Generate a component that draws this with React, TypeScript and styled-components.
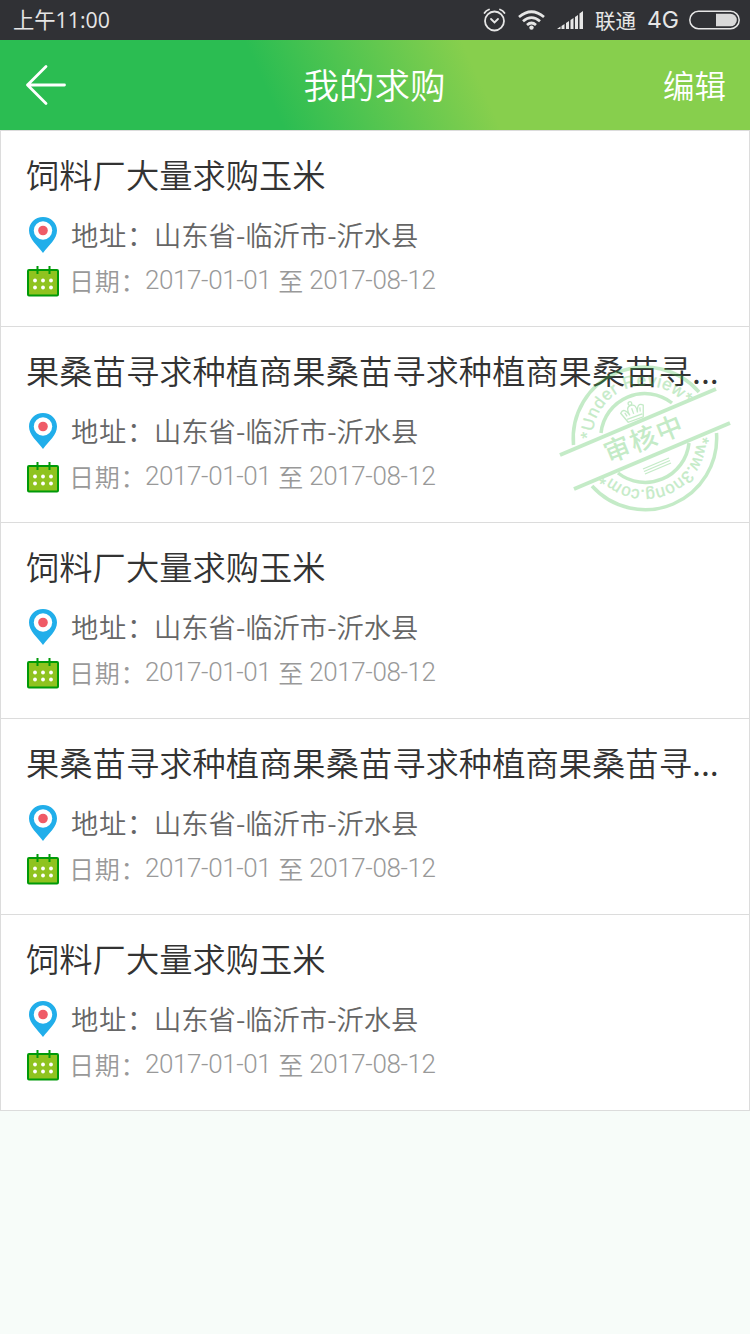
import React from "react";
import styled, { createGlobalStyle } from "styled-components";

const Global = createGlobalStyle`
  * { box-sizing: border-box; }
  body { margin: 0; background: #f7fcf9; font-family: "Noto Sans CJK SC", sans-serif; }
`;

const Screen = styled.main`
  width: 750px;
  min-height: 1334px;
  background: #f7fcf9;
`;

const StatusBar = styled.div`
  height: 40px;
  padding: 0 10px 0 13px;
  display: flex;
  align-items: center;
  background: #303135;
  color: #e6e6e6;
  font-size: 21px;
  line-height: 40px;
`;

const Clock = styled.span`
  flex: 1;
  font-family: "Open Sans", "Noto Sans CJK SC", sans-serif;
  font-size: 21.3px;
  font-weight: 400;
`;

const StatusIcon = styled.svg<{ $gap: number }>`
  display: block;
  flex: none;
  margin-right: ${(p) => p.$gap}px;
`;

const Carrier = styled.span`
  width: 41px;
  margin-right: 11px;
  font-size: 20.5px;
`;

const Network = styled.span`
  width: 32px;
  margin-right: 10px;
  font-family: Inter, sans-serif;
  font-size: 23px;
`;

const Header = styled.header`
  height: 90px;
  padding: 0 24px 0 25px;
  display: grid;
  grid-template-columns: 1fr auto 1fr;
  align-items: center;
  background: linear-gradient(66deg, #2bbd52 36%, #87cf4d 63.5%);
  color: #fff;
`;

const BackButton = styled.button`
  width: 42px;
  height: 42px;
  padding: 0;
  border: 0;
  background: none;
  color: inherit;
`;

const Title = styled.h1`
  margin: 0;
  padding: 0 2px 3px 0;
  font-size: 35.5px;
  font-weight: 350;
  line-height: 87px;
`;

const EditButton = styled.button`
  justify-self: end;
  padding: 0 0 1px;
  border: 0;
  background: none;
  color: inherit;
  font: 350 31.5px/89px "Noto Sans CJK SC", sans-serif;
`;

const List = styled.ul`
  margin: 0;
  padding: 0;
  list-style: none;
  border: 1px solid #dcdcdc;
  border-top-width: 0;
`;

const Card = styled.li`
  position: relative;
  height: 196px;
  padding: 19px 25px 0;
  border-top: 1px solid #dcdcdc;
  background: #fff;
`;

const CardTitle = styled.h2`
  margin: 0;
  color: #333;
  font-size: 33.3px;
  font-weight: 350;
  line-height: 48px;
  white-space: nowrap;
`;

const Line = styled.div<{ $tone: string; $size: number; $height: number }>`
  display: flex;
  align-items: center;
  height: ${(p) => p.$height}px;
  color: ${(p) => p.$tone};
  font-size: ${(p) => p.$size}px;
  font-weight: 350;
  white-space: pre;

  > svg {
    flex: none;
    margin-left: 1px;
  }
`;

const AddressLine = styled(Line)`
  margin-top: 14px;

  > span {
    padding-bottom: 2px;
  }
`;

const DateLine = styled(Line)`
  > svg {
    margin-top: 2px;
  }
`;

const Label = styled.span<{ $width: number; $indent: number }>`
  width: ${(p) => p.$width}px;
  margin-left: ${(p) => p.$indent}px;
  letter-spacing: 0.7px;
`;

const Numerals = styled.span`
  font-family: Roboto, sans-serif;
  font-size: 26px;
  font-weight: 350;
  letter-spacing: -0.4px;
  line-height: 40px;
  padding-bottom: 1px;
`;

const Until = styled.span`
  width: 25px;
  margin: 0 6px 0 7px;
`;

const Stamp = styled.svg`
  position: absolute;
  left: 554px;
  top: 33px;
  opacity: 0.3;
`;

const PinIcon = () => (
  <svg width="32" height="38" viewBox="0 0 32 38">
    <path d="M16 1C8 1 2 7 2 14.500C2 23 10 29 16 37C22 29 30 23 30 14.500C30 7 24 1 16 1Z" fill="#21aeea" />
    <circle cx="16" cy="14.500" r="9.200" fill="#fff" />
    <circle cx="16" cy="14.500" r="4.800" fill="#ef5b67" />
  </svg>
);

const CalendarIcon = () => (
  <svg width="32" height="32" viewBox="0 0 32 32">
    <rect x="1" y="5" width="30" height="25.500" rx="1" fill="#8fc31f" stroke="#009a08" strokeWidth="2" />
    <path d="M10.500 1V9M22.500 1V9" stroke="#009a08" strokeWidth="2" />
    {[8, 16, 24].map((x) =>
      [15.5, 22.5].map((y) => <circle key={`${x}-${y}`} cx={x} cy={y} r="1.900" fill="#fff" />),
    )}
  </svg>
);

const ReviewStamp = () => (
  <Stamp width="182" height="160" viewBox="555 360 182 160" fill="none" stroke="#3fbe4a">
    <defs>
      <path id="stampTop" d="M592.500 439A52.500 52.500 0 0 1 690 411" />
      <path id="stampBottom" d="M697 437A52 52 0 0 1 600 464" />
    </defs>
    <g strokeWidth="3.500">
      <path d="M573.500 445A71.500 71.500 0 0 1 699 392" />
      <path d="M716.500 433A71.500 71.500 0 0 1 592 486" />
      <path d="M601 433A44 44 0 0 1 672 403" />
      <path d="M689 443A44 44 0 0 1 618 473" />
      <path d="M560 455L716 389M574 489L730 423" strokeWidth="4" />
    </g>
    <g strokeWidth="1.300">
      <path d="M643 469L669 458M644 471.500L670 460.500M645 474L671 463" />
      <g transform="translate(633 412) rotate(-20)">
        <path d="M-8 8L-12 -3Q-7 -8 -4 2Q-6 -7 0 -7Q6 -7 4 2Q7 -8 12 -3L8 8ZM-8 5H8M-7 2L-8 -2M0 2V-4M7 2L8 -2" />
        <circle cy="-9" r="1.800" />
      </g>
    </g>
    <g fill="#3fbe4a" stroke="#3fbe4a" strokeWidth="0.400" fontFamily="Liberation Sans, sans-serif" fontSize="17">
      <text textLength="129" lengthAdjust="spacing"><textPath href="#stampTop">*Under Review*</textPath></text>
      <text textLength="126" lengthAdjust="spacing"><textPath href="#stampBottom">*ww.3nong.com*</textPath></text>
      <text x="644" y="448.500" fontFamily="Noto Sans CJK SC, sans-serif" fontSize="26.500" fontWeight="500" letterSpacing="1.500" textAnchor="middle" stroke="none" transform="rotate(-22 643 439)">审核中</text>
    </g>
  </Stamp>
);

const SHORT = "饲料厂大量求购玉米";
const LONG = "果桑苗寻求种植商果桑苗寻求种植商果桑苗寻...";

const requests = [
  { title: SHORT, reviewing: false },
  { title: LONG, reviewing: true },
  { title: SHORT, reviewing: false },
  { title: LONG, reviewing: false },
  { title: SHORT, reviewing: false },
];

export default function App() {
  return (
    <Screen>
      <Global />
      <StatusBar>
        <Clock>上午11:00</Clock>
        <StatusIcon $gap={12} width="24" height="24" viewBox="0 0 24 24" fill="none" stroke="#e6e6e6" strokeWidth="1.800" strokeLinecap="round">
          <circle cx="12.500" cy="13" r="9.500" />
          <path d="M9 11L12.500 14.500L16 11M2.500 5Q4 2.500 7 1.500M18 1.500Q21 2.500 22.500 5" />
        </StatusIcon>
        <StatusIcon $gap={12} width="27" height="20" viewBox="0 0 27 20" fill="none" stroke="#e6e6e6" strokeWidth="2.700">
          <path d="M1 7Q13.500 -3.500 26 7M5 11.300Q13.500 4 22 11.300M9 15Q13.500 11 18 15" />
          <circle cx="13.500" cy="17.600" r="2.200" fill="#e6e6e6" stroke="none" />
        </StatusIcon>
        <StatusIcon $gap={12} width="26" height="18" viewBox="0 0 26 18" fill="#e6e6e6">
          <path d="M0 18L3.500 15.500V18ZM4.500 15L7.500 13V18H4.500ZM9 12L12 10V18H9ZM13.500 9L16.500 7V18H13.500ZM18 6L21 4V18H18ZM22.500 2.500L26 0V18H22.500Z" />
        </StatusIcon>
        <Carrier>联通</Carrier>
        <Network>4G</Network>
        <StatusIcon $gap={0} width="51" height="20" viewBox="0 0 51 20">
          <rect x="0.800" y="1.300" width="49.400" height="17.400" rx="8.700" fill="none" stroke="#e6e6e6" strokeWidth="1.500" />
          <path d="M27 3.700H41.500A6.300 6.300 0 0 1 41.500 16.300H27Z" fill="#d9d9d9" />
        </StatusIcon>
      </StatusBar>
      <Header>
        <BackButton aria-label="返回">
          <svg width="42" height="42" viewBox="0 0 42 42" fill="none" stroke="#fff" strokeWidth="2.800" strokeLinecap="round" strokeLinejoin="round">
            <path d="M21 2.500L2.500 21L21 39.500M2.500 21H39.500" />
          </svg>
        </BackButton>
        <Title>我的求购</Title>
        <EditButton>编辑</EditButton>
      </Header>
      <List>
        {requests.map((r, i) => (
          <Card key={i}>
            <CardTitle>{r.title}</CardTitle>
            <AddressLine $tone="#666" $size={27.3} $height={46}>
              <PinIcon />
              <Label $width={83} $indent={12}>地址：</Label>
              <span>山东省-临沂市-沂水县</span>
            </AddressLine>
            <DateLine $tone="#999" $size={25} $height={44}>
              <CalendarIcon />
              <Label $width={76} $indent={10}>日期：</Label>
              <Numerals>2017-01-01</Numerals>
              <Until>至</Until>
              <Numerals>2017-08-12</Numerals>
            </DateLine>
            {r.reviewing && <ReviewStamp />}
          </Card>
        ))}
      </List>
    </Screen>
  );
}
